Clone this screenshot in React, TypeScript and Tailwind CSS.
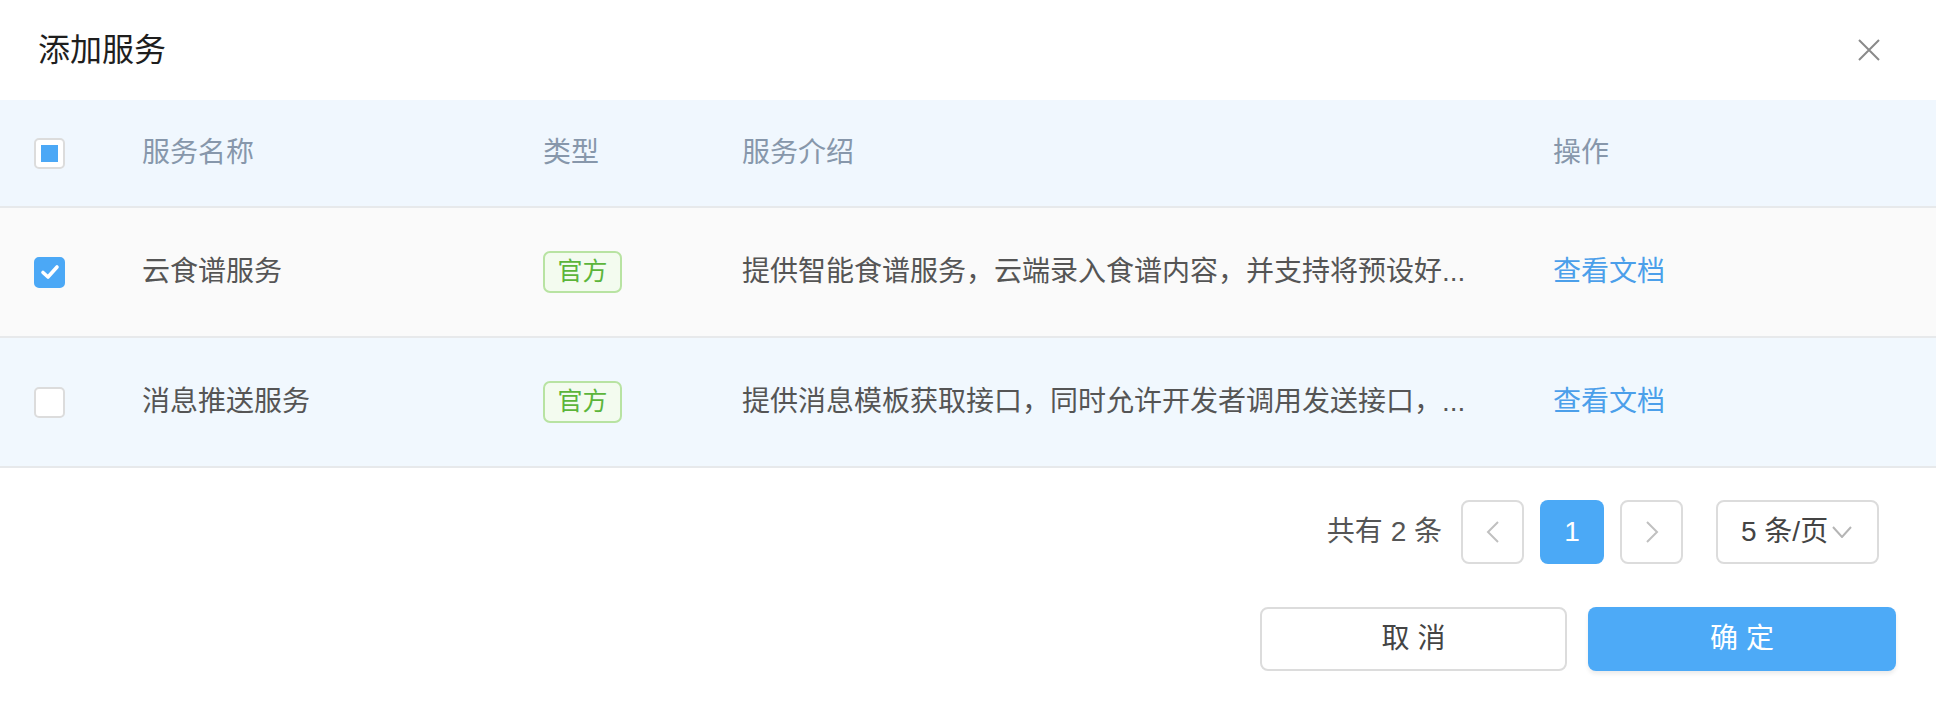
import { useState } from "react";

const rows = [
  {
    name: "云食谱服务",
    type: "官方",
    desc: "提供智能食谱服务，云端录入食谱内容，并支持将预设好...",
  },
  {
    name: "消息推送服务",
    type: "官方",
    desc: "提供消息模板获取接口，同时允许开发者调用发送接口，...",
  },
];

const font = { fontFamily: '"Liberation Sans", "Noto Sans CJK SC", sans-serif' };

const Check = ({ checked, partial }: { checked?: boolean; partial?: boolean }) => (
  <span
    className={`flex h-[31px] w-[31px] items-center justify-center rounded-[5px] border-2 ${
      checked ? "border-[#4ba8f6] bg-[#4ba8f6]" : "border-[#dcdcdc] bg-white"
    }`}
  >
    {checked && (
      <svg width="22" height="22" viewBox="0 0 22 22" fill="none">
        <polyline
          points="4,11.5 9,16 18,6"
          stroke="#fff"
          strokeWidth="3.6"
          strokeLinecap="round"
          strokeLinejoin="round"
        />
      </svg>
    )}
    {partial && <span className="h-[17px] w-[17px] bg-[#4ba8f6]" />}
  </span>
);

export default function App() {
  const [checked, setChecked] = useState([true, false]);

  return (
    <div className="h-[708px] w-[1936px] bg-white text-[#555]" style={font}>
      {/* title bar */}
      <div className="flex h-[100px] items-center justify-between pl-[38px] pr-[55px]">
        <h2 className="text-[32px] text-[#1e1e1e]">添加服务</h2>
        <button className="flex text-[#8a8a8a]">
          <svg width="24" height="24" viewBox="0 0 24 24" fill="none">
            <path d="M2 2L22 22M22 2L2 22" stroke="currentColor" strokeWidth="2" />
          </svg>
        </button>
      </div>

      {/* table */}
      <div className="text-[28px]">
        <div className="grid h-[108px] grid-cols-[142px_401px_199px_811px_1fr] items-center border-b-2 border-[#e7e9eb] bg-[#f0f7fe] text-[#8797ab]">
          <div className="pl-[34px]">
            <Check partial />
          </div>
          <div>服务名称</div>
          <div>类型</div>
          <div>服务介绍</div>
          <div>操作</div>
        </div>
        {rows.map((r, i) => (
          <div
            key={r.name}
            className={`grid h-[130px] grid-cols-[142px_401px_199px_811px_1fr] items-center border-b-2 border-[#e7e9eb] ${
              i === 0 ? "bg-[#fafafa]" : "bg-[#f1f8fe]"
            }`}
          >
            <div className="flex pl-[34px]">
              <button
                className="flex"
                onClick={() => setChecked(checked.map((c, j) => (j === i ? !c : c)))}
              >
                <Check checked={checked[i]} />
              </button>
            </div>
            <div>{r.name}</div>
            <div className="flex">
              <span className="inline-flex h-[42px] w-[79px] items-center justify-center rounded-[7px] border-2 border-[#b8e3a2] bg-[#f3fbef] text-[25px] text-[#5cb53a]">
                {r.type}
              </span>
            </div>
            <div className="whitespace-nowrap">{r.desc}</div>
            <div>
              <a href="#" className="text-[#4b9fea]">
                查看文档
              </a>
            </div>
          </div>
        ))}
      </div>

      {/* pagination */}
      <div className="mt-[32px] flex h-[64px] items-center justify-end pr-[57px] text-[28px]">
        <span className="mr-[19px]">共有 2 条</span>
        <button className="flex h-[64px] w-[63px] items-center justify-center rounded-[8px] border-2 border-[#dcdcdc] text-[#c0c0c0]">
          <svg width="14" height="24" viewBox="0 0 14 24" fill="none">
            <polyline points="12,2 2,12 12,22" stroke="currentColor" strokeWidth="2" />
          </svg>
        </button>
        <button className="ml-[16px] flex h-[64px] w-[64px] items-center justify-center rounded-[8px] bg-[#4ba9f6] text-white">
          1
        </button>
        <button className="ml-[16px] flex h-[64px] w-[63px] items-center justify-center rounded-[8px] border-2 border-[#dcdcdc] text-[#c0c0c0]">
          <svg width="14" height="24" viewBox="0 0 14 24" fill="none">
            <polyline points="2,2 12,12 2,22" stroke="currentColor" strokeWidth="2" />
          </svg>
        </button>
        <button className="ml-[33px] flex h-[64px] w-[163px] items-center rounded-[8px] border-2 border-[#dcdcdc] pl-[23px] text-[#444]">
          5 条/页
          <svg className="ml-[4px] text-[#b5b5b5]" width="20" height="12" viewBox="0 0 20 12" fill="none">
            <polyline points="1,1 10,11 19,1" stroke="currentColor" strokeWidth="2" />
          </svg>
        </button>
      </div>

      {/* footer */}
      <div className="mt-[43px] flex justify-end gap-[21px] pr-[40px] text-[28px]">
        <button className="h-[64px] w-[307px] rounded-[8px] border-2 border-[#dcdcdc] bg-white text-[#444]">
          取 消
        </button>
        <button className="h-[64px] w-[308px] rounded-[8px] bg-[#4daaf7] text-white shadow-[0_3px_4px_rgba(0,0,0,0.08)]">
          确 定
        </button>
      </div>
    </div>
  );
}
